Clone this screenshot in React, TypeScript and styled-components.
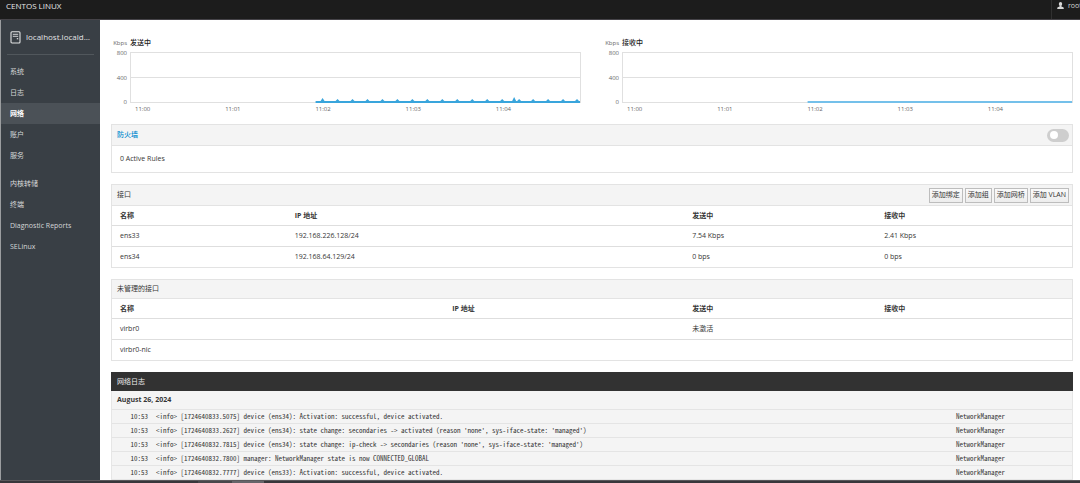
import React from "react";
import styled, { createGlobalStyle } from "styled-components";

const GlobalStyle = createGlobalStyle`
  * { box-sizing: border-box; }
  body {
    margin: 0;
    background: #fff;
    color: #363636;
    font-family: "Open Sans", "Noto Sans CJK SC", sans-serif;
    font-size: 7px;
    line-height: 10px;
  }
  button, input { font: inherit; margin: 0; }
`;

const Page = styled.div`
  display: grid;
  grid-template-rows: auto minmax(0, 1fr) auto;
  height: 100vh;
  overflow: hidden;
`;

const TopBar = styled.header`
  display: flex;
  justify-content: space-between;
  height: 20px;
  background: #1c1c1c;
  border-bottom: 1px solid #454348;
  color: #e8e8e8;
`;

const Brand = styled.span`
  padding: 0 6px;
  font-size: 8px;
  line-height: 11px;
`;

const UserButton = styled.button`
  display: flex;
  align-items: flex-start;
  gap: 4px;
  width: 29px;
  padding: 1px 0 0 5px;
  overflow: hidden;
  border: 0;
  border-left: 1px solid #303030;
  background: none;
  color: #d6d6d6;
  text-align: left;
  svg { flex: none; margin-top: 1px; }
`;

const Body = styled.div`
  display: grid;
  grid-template-columns: 100px minmax(0, 1fr);
  min-height: 0;
`;

const Sidebar = styled.nav`
  border-left: 1px solid #9b9d9f;
  background: #393f45;
  color: #d5d7d8;
`;

const Host = styled.a`
  display: flex;
  align-items: center;
  gap: 5px;
  height: 35px;
  margin: 0 6px 6px;
  padding: 0 3px;
  border-bottom: 1px solid #51575c;
  color: #e2e3e4;
  font-size: 8px;
  text-decoration: none;
  svg { flex: none; }
`;

const HostName = styled.span`
  overflow: hidden;
  text-overflow: ellipsis;
  white-space: nowrap;
`;

const NavList = styled.ul`
  margin: 0 0 7px;
  padding: 0;
  list-style: none;
`;

const NavLink = styled.a<{ $active?: boolean }>`
  display: block;
  padding: 0 9px;
  line-height: 21px;
  background: ${(p) => (p.$active ? "#4b5157" : "transparent")};
  color: ${(p) => (p.$active ? "#fff" : "inherit")};
  font-weight: ${(p) => (p.$active ? 700 : 400)};
  text-decoration: none;
`;

const Main = styled.main`
  display: flex;
  flex-direction: column;
  gap: 11px;
  min-width: 0;
  padding: 18px 7px 0 11px;
  overflow: hidden;
`;

const Charts = styled.section`
  display: grid;
  grid-template-columns: 1fr 1fr;
  gap: 22px;
  margin-bottom: 1px;
`;

const Chart = styled.figure`
  display: grid;
  grid-template-columns: 16px minmax(0, 1fr);
  column-gap: 3px;
  margin: 0;
`;

const Unit = styled.span`
  justify-self: end;
  color: #666;
  font-size: 6px;
`;

const ChartTitle = styled.figcaption`
  color: #222;
  font-weight: 500;
`;

const Scale = styled.div`
  display: flex;
  flex-direction: column;
  justify-content: space-between;
  padding-top: 1px;
  color: #666;
  font-size: 6px;
  line-height: 8px;
  text-align: right;
`;

const PlotArea = styled.div`
  height: 51px;
  margin: 4px 0 3px;
  border: 1px solid #e0e0e0;
  background: linear-gradient(#e0e0e0, #e0e0e0) 0 24px / 100% 1px no-repeat;
  svg { display: block; width: 100%; height: 50px; }
`;

const Times = styled.div`
  display: flex;
  grid-column: 2;
  color: #666;
  font-size: 6px;
  line-height: 6px;
  span { flex: 0 0 20%; padding-left: 5px; }
`;

const Panel = styled.section`
  border: 1px solid #e3e3e3;
`;

const PanelHead = styled.header<{ $short?: boolean }>`
  display: flex;
  align-items: center;
  justify-content: space-between;
  height: ${(p) => (p.$short ? 19 : 21)}px;
  padding: 0 3px 0 5px;
  border-bottom: 1px solid #e3e3e3;
  background: #f4f4f4;
`;

const PanelTitle = styled.h2`
  margin: 0;
  font-size: 7px;
  font-weight: 400;
  a { color: #0088ce; font-weight: 500; text-decoration: none; }
`;

const PanelText = styled.p`
  margin: 0;
  padding: 8px;
`;

const Switch = styled.input`
  appearance: none;
  display: flex;
  align-items: center;
  width: 22px;
  height: 13px;
  padding: 0 3px;
  border-radius: 7px;
  background: #cecece;
  &::before {
    content: "";
    width: 8px;
    height: 8px;
    border-radius: 50%;
    background: #fff;
  }
  &:checked { justify-content: flex-end; background: #39a5dc; }
`;

const Actions = styled.div`
  display: flex;
  gap: 2px;
`;

const ActionButton = styled.button`
  height: 15px;
  padding: 0 2px;
  border: 1px solid #bdbdbd;
  background: linear-gradient(#fafafa, #ededed);
  color: #333;
  white-space: nowrap;
`;

const Table = styled.table`
  width: 100%;
  border-collapse: collapse;
  table-layout: fixed;
  th, td {
    padding: 5px 8px;
    text-align: left;
  }
  th {
    padding-bottom: 4px;
    font-weight: 700;
  }
  tbody tr { border-top: 1px solid #dedede; }
`;

const Col = styled.col<{ $w: number }>`
  width: ${(p) => p.$w}%;
`;

const Log = styled.section`
  border: 1px solid #e6e6e6;
  border-top: 0;
  background: #f4f4f4;
`;

const LogTitle = styled.h2`
  margin: 0 -1px;
  padding: 0 6px;
  background: #323232;
  color: #f0f0f0;
  font-size: 7px;
  font-weight: 400;
  line-height: 19px;
`;

const LogDate = styled.h3`
  margin: 0;
  padding: 0 5px;
  font-size: 7px;
  font-weight: 700;
  line-height: 18px;
`;

const LogRow = styled.div`
  display: grid;
  grid-template-columns: 36px minmax(0, 1fr) 116px;
  column-gap: 8px;
  border-top: 1px solid #e4e4e4;
  color: #333;
  font-family: "Noto Sans CJK SC", monospace;
  font-feature-settings: "hwid";
  line-height: 13px;
  white-space: nowrap;
  time { text-align: right; }
`;

const BottomEdge = styled.footer`
  height: 3px;
  border-top: 1px solid #5a595c;
  background: linear-gradient(90deg, #38373b 0 198px, #48474b 198px 232px, #66656a 232px 264px, #38373b 264px);
`;

const sentPeaks: [number, number][] = [
  [7, 3], [22, 2], [37, 2], [52, 2], [67, 2], [82, 2], [97, 2], [112, 2],
  [127, 2], [142, 2], [157, 2], [172, 2], [187, 2], [199, 4], [204, 2],
  [218, 2], [233, 2], [248, 2], [262, 2],
];

function trace(start: number, base: number, peaks: [number, number][]) {
  const bumps = peaks
    .map(([x, h]) => `L${start + x - 2} ${base} L${start + x} ${base - h} L${start + x + 2} ${base}`)
    .join(" ");
  return `M${start} 50 L${start} ${base} ${bumps} L450 ${base} L450 50 Z`;
}

function TrafficChart({ title, path, color }: { title: string; path: string; color: string }) {
  return (
    <Chart>
      <Unit>Kbps</Unit>
      <ChartTitle>{title}</ChartTitle>
      <Scale>
        <span>800</span>
        <span>400</span>
        <span>0</span>
      </Scale>
      <PlotArea>
        <svg viewBox="0 0 450 50" preserveAspectRatio="none" aria-hidden="true">
          <path d={path} fill={color} />
        </svg>
      </PlotArea>
      <Times>
        {["11:00", "11:01", "11:02", "11:03", "11:04"].map((t) => (
          <span key={t}>{t}</span>
        ))}
      </Times>
    </Chart>
  );
}

function DataTable({ widths, rows }: { widths: number[]; rows: string[][] }) {
  return (
    <Table>
      <colgroup>
        {widths.map((w, i) => (
          <Col key={i} $w={w} />
        ))}
      </colgroup>
      <thead>
        <tr>
          {["名称", "IP 地址", "发送中", "接收中"].map((h) => (
            <th key={h} scope="col">{h}</th>
          ))}
        </tr>
      </thead>
      <tbody>
        {rows.map((r) => (
          <tr key={r[0]}>
            {r.map((c, i) => (
              <td key={i}>{c}</td>
            ))}
          </tr>
        ))}
      </tbody>
    </Table>
  );
}

const navGroups = [
  ["系统", "日志", "网络", "账户", "服务"],
  ["内核转储", "终端", "Diagnostic Reports", "SELinux"],
];

const logLines = [
  "<info> [1724640833.5075] device (ens34): Activation: successful, device activated.",
  "<info> [1724640833.2627] device (ens34): state change: secondaries -> activated (reason 'none', sys-iface-state: 'managed')",
  "<info> [1724640832.7815] device (ens34): state change: ip-check -> secondaries (reason 'none', sys-iface-state: 'managed')",
  "<info> [1724640832.7800] manager: NetworkManager state is now CONNECTED_GLOBAL",
  "<info> [1724640832.7777] device (ens33): Activation: successful, device activated.",
];

export default function App() {
  return (
    <Page>
      <GlobalStyle />
      <TopBar>
        <Brand>CENTOS LINUX</Brand>
        <UserButton type="button">
          <svg width="7" height="7" viewBox="0 0 7 7" fill="currentColor" aria-hidden="true">
            <ellipse cx="3.5" cy="2" rx="1.7" ry="2" />
            <path d="M2.6 3.4h1.8v1l1.9.8q.5.3.5 1.8H.2q0-1.5.5-1.8l1.9-.8z" />
          </svg>
          <span>root</span>
        </UserButton>
      </TopBar>
      <Body>
        <Sidebar>
          <Host href="#host">
            <svg width="11" height="13" viewBox="0 0 11 13" fill="none" stroke="currentColor" aria-hidden="true">
              <rect x="1" y="0.7" width="9" height="11.3" rx="1" strokeWidth="1.1" />
              <path d="M2.8 3.3h5.4M2.8 5.3h5.4" strokeWidth="0.9" />
              <path d="M6.8 7.7h1.4" strokeWidth="1.2" />
            </svg>
            <HostName>localhost.localdomain</HostName>
          </Host>
          {navGroups.map((group) => (
            <NavList key={group[0]}>
              {group.map((item) => (
                <li key={item}>
                  <NavLink href={`#${item}`} $active={item === "网络"}>{item}</NavLink>
                </li>
              ))}
            </NavList>
          ))}
        </Sidebar>
        <Main>
          <Charts>
            <TrafficChart title="发送中" path={trace(185, 48, sentPeaks)} color="#39a5dc" />
            <TrafficChart title="接收中" path={trace(185, 48, [])} color="#74c0ea" />
          </Charts>
          <Panel>
            <PanelHead>
              <PanelTitle><a href="#firewall">防火墙</a></PanelTitle>
              <Switch type="checkbox" role="switch" aria-label="防火墙" />
            </PanelHead>
            <PanelText>0 Active Rules</PanelText>
          </Panel>
          <Panel>
            <PanelHead>
              <PanelTitle>接口</PanelTitle>
              <Actions>
                {["添加绑定", "添加组", "添加网桥", "添加 VLAN"].map((label) => (
                  <ActionButton key={label} type="button">{label}</ActionButton>
                ))}
              </Actions>
            </PanelHead>
            <DataTable
              widths={[18.2, 41.4, 20, 20.4]}
              rows={[
                ["ens33", "192.168.226.128/24", "7.54 Kbps", "2.41 Kbps"],
                ["ens34", "192.168.64.129/24", "0 bps", "0 bps"],
              ]}
            />
          </Panel>
          <Panel>
            <PanelHead $short>
              <PanelTitle>未管理的接口</PanelTitle>
            </PanelHead>
            <DataTable
              widths={[34.6, 25, 20, 20.4]}
              rows={[
                ["virbr0", "", "未激活", ""],
                ["virbr0-nic", "", "", ""],
              ]}
            />
          </Panel>
          <Log>
            <LogTitle>网络日志</LogTitle>
            <LogDate>August 26, 2024</LogDate>
            {logLines.map((line) => (
              <LogRow key={line}>
                <time>10:53</time>
                <span>{line}</span>
                <span>NetworkManager</span>
              </LogRow>
            ))}
          </Log>
        </Main>
      </Body>
      <BottomEdge />
    </Page>
  );
}
